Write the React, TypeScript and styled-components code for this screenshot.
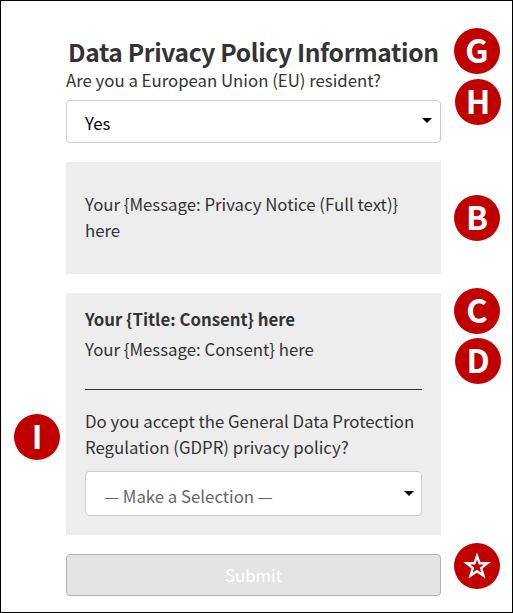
import React from "react";
import styled, { createGlobalStyle } from "styled-components";

const Global = createGlobalStyle`
  * { box-sizing: border-box; }
  body { margin: 0; background: #fff; }
`;

const Page = styled.div`
  position: relative;
  width: 513px;
  height: 613px;
  border: 1px solid #000;
  padding: 33px 71px 0 65px;
  background: #fff;
  color: #333;
  font-family: "Noto Sans CJK SC", "Open Sans", sans-serif;
  font-size: 16.8px;
  line-height: 26px;
  white-space: nowrap;
`;

const Form = styled.form`
  display: flex;
  flex-direction: column;
`;

const Heading = styled.h1`
  margin: 0 0 0 2px;
  height: 33px;
  font-size: 24.6px;
  font-weight: 700;
  line-height: 34px;
  letter-spacing: -0.36px;
`;

const Label = styled.label`
  display: block;
  height: 33px;
`;

const Select = styled.div<{ $height: number; $placeholder?: boolean }>`
  display: flex;
  justify-content: space-between;
  height: ${(p) => p.$height}px;
  padding: ${(p) => (p.$placeholder ? "11px 7px 0 18px" : "9px 8px 0 18px")};
  border: 1px solid #ccc;
  border-radius: 4px;
  background: #fff;
  color: ${(p) => (p.$placeholder ? "#666" : "#000")};
`;

const Caret = styled.svg`
  width: 10px;
  height: 5px;
  margin-top: 8px;
`;

const Panel = styled.section<{ $height: number; $top: number }>`
  height: ${(p) => p.$height}px;
  margin-top: 19px;
  padding: ${(p) => p.$top}px 19px 0;
  background: #ededed;
`;

const Text = styled.p`
  margin: 0;
`;

const ConsentTitle = styled.h2`
  margin: 0 0 4px;
  font-size: 16.8px;
  font-weight: 700;
  line-height: 26px;
`;

const Divider = styled.hr`
  height: 1px;
  margin: 27px 0 18px;
  border: 0;
  background: #333;
`;

const Question = styled.label`
  display: block;
  height: 63px;
`;

const Submit = styled.button`
  height: 42px;
  margin-top: 19px;
  padding: 0;
  border: 1px solid #b3b3b3;
  border-radius: 4px;
  background: #e4e4e4;
  color: #fff;
  font: inherit;
`;

const Badge = styled.span<{ $x: number; $y: number }>`
  position: absolute;
  left: ${(p) => p.$x - 1}px;
  top: ${(p) => p.$y - 1}px;
  display: flex;
  align-items: center;
  justify-content: center;
  width: 46px;
  height: 46px;
  border-radius: 50%;
  background: #c00000;
  color: #fff;
  font: 700 32.5px/42px "Noto Sans CJK SC", sans-serif;
`;

const Letter = styled.span`
  height: 46px;
`;

const badges = [
  { letter: "G", x: 454, y: 28 },
  { letter: "H", x: 455, y: 79 },
  { letter: "B", x: 454, y: 195 },
  { letter: "C", x: 454, y: 288 },
  { letter: "D", x: 455, y: 338 },
  { letter: "I", x: 14, y: 414 },
];

const Arrow = () => (
  <Caret viewBox="0 0 10 5">
    <path d="M0 0H10L5 5Z" fill="#000" />
  </Caret>
);

export default function App() {
  return (
    <>
      <Global />
      <Page>
        <Form>
          <Heading>Data Privacy Policy Information</Heading>
          <Label>Are you a European Union (EU) resident?</Label>
          <Select $height={43}>
            Yes
            <Arrow />
          </Select>
          <Panel $height={112} $top={29}>
            <Text>
              Your {"{Message: Privacy Notice (Full text)}"}
              <br />
              here
            </Text>
          </Panel>
          <Panel $height={242} $top={13}>
            <ConsentTitle>Your {"{Title: Consent}"} here</ConsentTitle>
            <Text>Your {"{Message: Consent}"} here</Text>
            <Divider />
            <Question>
              Do you accept the General Data Protection
              <br />
              Regulation (GDPR) privacy policy?
            </Question>
            <Select $height={45} $placeholder>
              — Make a Selection —
              <Arrow />
            </Select>
          </Panel>
          <Submit type="button">Submit</Submit>
        </Form>
        {badges.map((b) => (
          <Badge key={b.letter} $x={b.x} $y={b.y}>
            <Letter>{b.letter}</Letter>
          </Badge>
        ))}
        <Badge $x={454} $y={543}>
          <svg width="28" height="28" viewBox="0 0 28 28">
            <path
              d="M14 4L16.6 11.3H24.3L18.2 16.1L20.4 23.6L14 19.2L7.6 23.6L9.8 16.1L3.7 11.3H11.4Z"
              fill="none"
              stroke="#fff"
              strokeWidth="2.4"
            />
          </svg>
        </Badge>
      </Page>
    </>
  );
}
